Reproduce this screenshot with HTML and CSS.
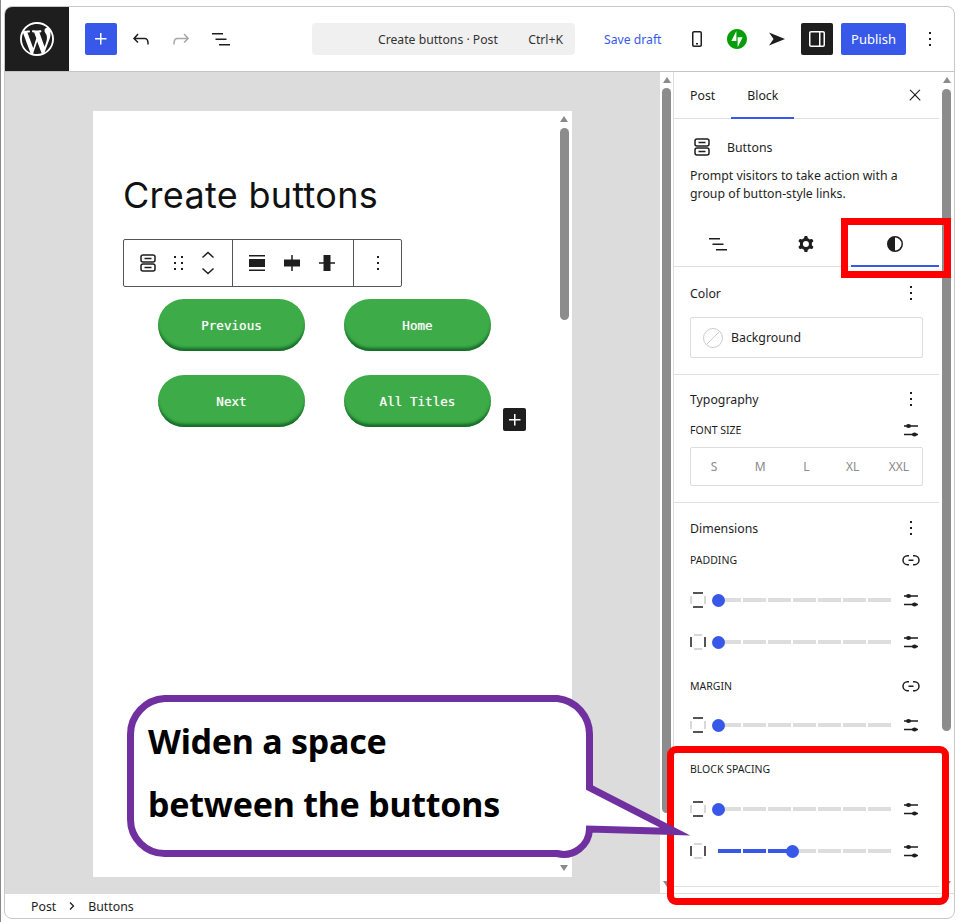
FILE: index.html
```html
<!DOCTYPE html>
<html lang="en">
<head>
<meta charset="utf-8">
<title>Create buttons</title>
<link rel="stylesheet" href="styles.css">
</head>
<body>
<svg class="defs" width="0" height="0" aria-hidden="true">
  <defs>
    <symbol id="i-kebab" viewBox="0 0 24 24"><path d="M13 19h-2v-2h2v2zm0-6h-2v-2h2v2zm0-6h-2V5h2v2z"/></symbol>
    <symbol id="i-list" viewBox="0 0 24 24"><path d="M3 6h11v1.5H3V6zm3.5 5.5h11V13h-11v-1.5zM21 17H10v1.5h11V17z"/></symbol>
    <symbol id="i-buttons" viewBox="0 0 24 24"><g fill="none" stroke="#1e1e1e" stroke-width="1.5"><rect x="5" y="4" width="14" height="7" rx="2"/><rect x="5" y="13" width="14" height="7" rx="2"/><path d="M8.500 7.500h7M8.500 16.500h7"/></g></symbol>
    <symbol id="i-sliders" viewBox="0 0 24 24"><path d="M5 7.250h14v1.500H5zM5 15.750h14v1.500H5z"/><ellipse cx="9.500" cy="8" rx="2.500" ry="2"/><ellipse cx="15.500" cy="16.500" rx="2.500" ry="2"/></symbol>
    <symbol id="i-link" viewBox="0 0 24 24"><path d="M10 17.389H8.444A5.194 5.194 0 1 1 8.444 7H10v1.500H8.444a3.694 3.694 0 0 0 0 7.389H10v1.500ZM14 7h1.556a5.194 5.194 0 0 1 0 10.390H14v-1.500h1.556a3.694 3.694 0 0 0 0-7.390H14V7Zm-4.500 6h5v-1.500h-5V13Z"/></symbol>
    <symbol id="i-axial-v" viewBox="0 0 16 16"><path d="M1 4v8M15 4v8" fill="none" stroke="#ccc" stroke-width="1.500"/><path d="M3 1h10M3 15h10" fill="none" stroke="#1e1e1e" stroke-width="1.500"/></symbol>
    <symbol id="i-axial-h" viewBox="0 0 16 16"><path d="M4 1h8M4 15h8" fill="none" stroke="#ccc" stroke-width="1.500"/><path d="M1 3v10M15 3v10" fill="none" stroke="#1e1e1e" stroke-width="1.500"/></symbol>
  </defs>
</svg>

<div class="frame">
  <header class="topbar">
    <div class="logo">
      <svg width="34" height="34" viewBox="0 0 20 20"><path fill="#fff" d="M20 10c0-5.510-4.490-10-10-10C4.480 0 0 4.490 0 10c0 5.520 4.480 10 10 10 5.510 0 10-4.480 10-10zM7.780 15.370L4.370 6.220c.55-.02 1.170-.08 1.170-.08.5-.06.44-1.130-.06-1.110 0 0-1.450.11-2.370.11-.18 0-.37 0-.58-.01C4.120 2.690 6.870 1.110 10 1.110c2.330 0 4.450.87 6.050 2.340-.68-.11-1.650.39-1.650 1.580 0 .74.45 1.360.9 2.100.35.61.55 1.360.55 2.460 0 1.490-1.400 5-1.400 5l-3.030-8.370c.54-.02.82-.17.82-.17.5-.05.44-1.250-.06-1.220 0 0-1.440.12-2.380.12-.87 0-2.330-.12-2.330-.12-.5-.03-.56 1.200-.06 1.220l.92.08 1.260 3.410zM17.410 10c.24-.64.74-1.870.43-4.250.7 1.290 1.050 2.710 1.050 4.250 0 3.290-1.730 6.240-4.400 7.780.97-2.590 1.940-5.200 2.920-7.780zM6.100 18.090C3.120 16.650 1.110 13.530 1.110 10c0-1.300.23-2.480.72-3.590C3.250 10.300 4.670 14.200 6.100 18.090zm4.030-6.630l2.580 6.980c-.86.29-1.760.45-2.710.45-.79 0-1.570-.11-2.290-.33.81-2.380 1.620-4.740 2.420-7.100z"/></svg>
    </div>
    <div class="tools">
      <span class="tool tool-primary"><svg width="24" height="24" viewBox="0 0 24 24"><path fill="#fff" d="M11 12.500V17.500H12.500V12.500H17.500V11H12.500V6H11V11H6V12.500H11Z"/></svg></span>
      <span class="tool"><svg width="24" height="24" viewBox="0 0 24 24"><path d="M18.300 11.700c-.6-.6-1.400-.9-2.300-.9H6.700l2.900-3.300-1.100-1-4.500 5L8.500 16l1-1-2.700-2.700H16c.5 0 .9.2 1.300.5 1 1 1 3.400 1 4.500v.3h1.500v-.2c0-1.500 0-4.300-1.500-5.700z"/></svg></span>
      <span class="tool"><svg width="24" height="24" viewBox="0 0 24 24"><path fill="#a8a8a8" d="M15.600 6.500l-1.100 1 2.900 3.300H8c-.9 0-1.700.3-2.300.9-1.400 1.500-1.400 4.200-1.400 5.600v.2h1.500v-.3c0-1.100 0-3.500 1-4.500.3-.3.7-.5 1.300-.5h9.200L14.500 15l1.100 1.100 4.600-4.600-4.600-5z"/></svg></span>
      <span class="tool"><svg width="24" height="24"><use href="#i-list"/></svg></span>
    </div>
    <div class="command"><span>Create buttons · Post</span><kbd class="shortcut">Ctrl+K</kbd></div>
    <a class="save">Save draft</a>
    <div class="actions">
      <span class="tool"><svg width="24" height="24" viewBox="0 0 24 24"><path d="M15 4H9c-1.100 0-2 .9-2 2v12c0 1.100.9 2 2 2h6c1.100 0 2-.9 2-2V6c0-1.100-.9-2-2-2zm.5 14c0 .3-.2.5-.5.5H9c-.3 0-.5-.2-.5-.5V6c0-.3.2-.5.5-.5h6c.3 0 .5.2.5.5v12zm-4.500-.5h2V16h-2v1.500z"/></svg></span>
      <span class="tool"><svg width="20" height="20" viewBox="0 0 32 32"><path fill="#069e08" d="M16 0C7.200 0 0 7.200 0 16s7.200 16 16 16 16-7.200 16-16S24.800 0 16 0zM15 19H7l8-16v16zm2 10V13h8l-8 16z"/></svg></span>
      <span class="tool"><svg width="24" height="24" viewBox="0 0 24 24"><path d="M4 5.500 20 12 4 18.500 8.500 12z"/></svg></span>
      <span class="tool tool-dark"><svg width="24" height="24" viewBox="0 0 24 24"><path fill="#fff" d="M18 4H6c-1.100 0-2 .9-2 2v12c0 1.100.9 2 2 2h12c1.100 0 2-.9 2-2V6c0-1.100-.9-2-2-2zM5.500 18V6c0-.3.2-.5.5-.5h8v13H6c-.3 0-.5-.2-.5-.5zm13 0c0 .3-.2.5-.5.5h-2.500v-13H18c.3 0 .5.2.5.5v12z"/></svg></span>
      <button class="publish">Publish</button>
      <span class="tool"><svg width="24" height="24"><use href="#i-kebab"/></svg></span>
    </div>
  </header>

  <div class="main">
    <section class="canvas">
      <article class="page">
        <div class="page-body">
          <h1 class="title">Create buttons</h1>
          <div class="block-toolbar">
            <div class="tb-group tb-first">
              <svg width="24" height="24"><use href="#i-buttons"/></svg>
              <svg width="24" height="24" viewBox="0 0 24 24"><path d="M8 5h2v2H8zm0 6h2v2H8zm0 6h2v2H8zM15 5h2v2h-2zm0 6h2v2h-2zm0 6h2v2h-2z"/></svg>
              <svg width="24" height="30" viewBox="0 0 24 30"><path fill="none" stroke="#1e1e1e" stroke-width="1.500" d="M6.500 9.500 12 4.500l5.500 5M6.500 20.500l5.500 5 5.500-5"/></svg>
            </div>
            <div class="tb-group tb-second">
              <svg width="24" height="24" viewBox="0 0 24 24"><path d="M4 4h16v1.500H4zM4 18.500h16V20H4zM4 8h16v8H4z"/></svg>
              <svg width="24" height="24" viewBox="0 0 24 24"><path d="M4 8.500h16v7H4zM11.250 4h1.500v16h-1.500z"/></svg>
              <svg width="24" height="24" viewBox="0 0 24 24"><path d="M8.500 4h7v16h-7zM4 11.250h16v1.500H4z"/></svg>
            </div>
            <div class="tb-group tb-third">
              <svg width="24" height="24"><use href="#i-kebab"/></svg>
            </div>
          </div>
          <div class="button-grid">
            <a class="wp-button">Previous</a>
            <a class="wp-button">Home</a>
            <a class="wp-button">Next</a>
            <a class="wp-button">All Titles</a>
            <span class="appender"><svg width="24" height="24" viewBox="0 0 24 24"><path fill="#fff" d="M11 12.500V17.500H12.500V12.500H17.500V11H12.500V6H11V11H6V12.500H11Z"/></svg></span>
          </div>
        </div>
        <div class="scrollbar page-scroll">
          <i class="arrow-up"></i>
          <i class="thumb thumb-page"></i>
          <i class="spacer"></i>
          <i class="arrow-down"></i>
        </div>
      </article>
    </section>

    <div class="scrollbar canvas-scroll">
      <i class="arrow-up"></i>
      <i class="thumb thumb-canvas"></i>
      <i class="spacer"></i>
      <i class="arrow-down"></i>
    </div>

    <aside class="sidebar">
      <div class="side-tabs">
        <span class="side-tab">Post</span>
        <span class="side-tab side-tab-active">Block</span>
        <svg class="close" width="18" height="18" viewBox="0 0 24 24"><path d="M13 11.800l6.100-6.300-1-1-6.100 6.200-6.100-6.200-1 1 6.100 6.300-6.500 6.700 1 1 6.500-6.600 6.500 6.600 1-1z"/></svg>
      </div>
      <div class="card">
        <div class="card-head"><svg width="24" height="24"><use href="#i-buttons"/></svg><span>Buttons</span></div>
        <p class="card-desc">Prompt visitors to take action with a group of button-style links.</p>
      </div>
      <div class="style-tabs">
        <span class="style-tab"><svg width="24" height="24"><use href="#i-list"/></svg></span>
        <span class="style-tab"><svg width="24" height="24" viewBox="0 0 24 24"><path fill-rule="evenodd" d="M10.289 4.836A1 1 0 0 1 11.275 4h1.306a1 1 0 0 1 .987.836l.244 1.466c.787.26 1.503.679 2.108 1.218l1.393-.522a1 1 0 0 1 1.216.437l.653 1.130a1 1 0 0 1-.23 1.273l-1.148.944a6.025 6.025 0 0 1 0 2.435l1.149.946a1 1 0 0 1 .23 1.272l-.653 1.130a1 1 0 0 1-1.216.437l-1.394-.522c-.605.54-1.320.958-2.108 1.218l-.244 1.466a1 1 0 0 1-.987.836h-1.306a1 1 0 0 1-.986-.836l-.244-1.466a5.995 5.995 0 0 1-2.108-1.218l-1.394.522a1 1 0 0 1-1.217-.436l-.653-1.131a1 1 0 0 1 .23-1.272l1.149-.946a6.026 6.026 0 0 1 0-2.435l-1.148-.944a1 1 0 0 1-.23-1.272l.653-1.131a1 1 0 0 1 1.217-.437l1.393.522a5.994 5.994 0 0 1 2.108-1.218l.244-1.466zM14.929 12a3 3 0 1 1-6 0 3 3 0 0 1 6 0z"/></svg></span>
        <span class="style-tab style-tab-active"><svg width="24" height="24" viewBox="0 0 24 24"><path fill-rule="evenodd" d="M12 4a8 8 0 1 0 0 16 8 8 0 0 0 0-16zm0 1.500a6.500 6.500 0 0 1 0 13z"/></svg></span>
      </div>

      <section class="panel panel-color">
        <div class="panel-head"><span>Color</span><svg width="24" height="24"><use href="#i-kebab"/></svg></div>
        <div class="color-box">
          <svg width="22" height="22" viewBox="0 0 22 22"><circle cx="11" cy="11" r="9.500" fill="none" stroke="#ccc"/><path d="M4.500 17.500 17.500 4.500" stroke="#ccc"/></svg>
          <span>Background</span>
        </div>
      </section>

      <section class="panel panel-type">
        <div class="panel-head"><span>Typography</span><svg width="24" height="24"><use href="#i-kebab"/></svg></div>
        <div class="sub-head sub-fontsize"><span>FONT SIZE</span><svg width="24" height="24"><use href="#i-sliders"/></svg></div>
        <div class="size-box"><span>S</span><span>M</span><span>L</span><span>XL</span><span>XXL</span></div>
      </section>

      <section class="panel panel-dims">
        <div class="panel-head"><span>Dimensions</span><svg width="24" height="24"><use href="#i-kebab"/></svg></div>
        <div class="sub-head sub-padding"><span>PADDING</span><svg width="24" height="24"><use href="#i-link"/></svg></div>
        <div class="slider-row sl-a">
          <svg width="16" height="16"><use href="#i-axial-v"/></svg>
          <div class="track"><i></i><i></i><i></i><i></i><i></i><i></i><i></i><b class="knob" style="left:-6px"></b></div>
          <svg width="24" height="24"><use href="#i-sliders"/></svg>
        </div>
        <div class="slider-row sl-b">
          <svg width="16" height="16"><use href="#i-axial-h"/></svg>
          <div class="track"><i></i><i></i><i></i><i></i><i></i><i></i><i></i><b class="knob" style="left:-6px"></b></div>
          <svg width="24" height="24"><use href="#i-sliders"/></svg>
        </div>
        <div class="sub-head sub-margin"><span>MARGIN</span><svg width="24" height="24"><use href="#i-link"/></svg></div>
        <div class="slider-row sl-c">
          <svg width="16" height="16"><use href="#i-axial-v"/></svg>
          <div class="track"><i></i><i></i><i></i><i></i><i></i><i></i><i></i><b class="knob" style="left:-6px"></b></div>
          <svg width="24" height="24"><use href="#i-sliders"/></svg>
        </div>
        <div class="sub-head sub-spacing"><span>BLOCK SPACING</span></div>
        <div class="slider-row sl-d">
          <svg width="16" height="16"><use href="#i-axial-v"/></svg>
          <div class="track"><i></i><i></i><i></i><i></i><i></i><i></i><i></i><b class="knob" style="left:-6px"></b></div>
          <svg width="24" height="24"><use href="#i-sliders"/></svg>
        </div>
        <div class="slider-row sl-e">
          <svg width="16" height="16"><use href="#i-axial-h"/></svg>
          <div class="track"><i class="on"></i><i class="on"></i><i class="on"></i><i></i><i></i><i></i><i></i><b class="knob" style="left:68px"></b></div>
          <svg width="24" height="24"><use href="#i-sliders"/></svg>
        </div>
      </section>
    </aside>

    <div class="scrollbar side-scroll">
      <i class="arrow-up"></i>
      <i class="thumb thumb-side"></i>
      <i class="spacer"></i>
      <i class="arrow-down"></i>
    </div>
  </div>

  <footer class="crumbs">
    <span>Post</span>
    <svg width="16" height="16" viewBox="0 0 16 16"><path fill="none" stroke="#1e1e1e" stroke-width="1.300" d="m6 4.500 3.500 3.500L6 11.500"/></svg>
    <span>Buttons</span>
  </footer>
</div>

<div class="mark mark-tab"></div>
<div class="mark mark-spacing"></div>

<svg class="callout-shape" width="600" height="180" viewBox="0 0 600 180">
  <path fill="#fff" stroke="#7030a0" stroke-width="7" stroke-miterlimit="20" d="M37.500 4.500H430.500A36 36 0 0 1 462.500 40.500V93.500L548 137.500 462.500 135A26 26 0 0 1 430 159.500H37.500A34 34 0 0 1 3.500 125.500V40.500A36 36 0 0 1 37.500 4.500Z"/>
</svg>
<p class="callout-text">Widen a space<br>between the buttons</p>
</body>
</html>
```

FILE: styles.css
```css
* { box-sizing: border-box; }
html, body { margin: 0; padding: 0; }
body {
  width: 960px;
  height: 922px;
  overflow: hidden;
  background: #fff;
  color: #1e1e1e;
  font-family: "Noto Sans", "Open Sans", sans-serif;
  font-size: 12.3px;
  border-left: 1px solid #888;
  position: relative;
}
.defs { position: absolute; }
svg { display: block; flex: none; fill: #1e1e1e; }

.frame {
  margin: 6px 0 0 3px;
  width: 951px;
  height: 913px;
  border: 1px solid #c8c8c8;
  border-radius: 8px;
  display: flex;
  flex-direction: column;
  overflow: hidden;
  background: #fff;
}

/* top bar */
.topbar {
  flex: none;
  height: 65px;
  border-bottom: 1px solid #c4c4c4;
  display: flex;
  align-items: center;
}
.logo {
  width: 64px;
  height: 64px;
  background: #1e1e1e;
  display: flex;
  align-items: center;
  justify-content: center;
}
.tools { display: flex; gap: 8px; margin-left: 16px; }
.tool {
  width: 32px;
  height: 32px;
  border-radius: 2px;
  display: flex;
  align-items: center;
  justify-content: center;
}
.tool-primary { background: #3858e9; }
.tool-dark { background: #1e1e1e; }
.command {
  margin-left: 75px;
  width: 263px;
  height: 32px;
  background: #f0f0f0;
  border-radius: 4px;
  display: flex;
  align-items: center;
  padding: 0 12px 0 66px;
  justify-content: space-between;
  font-size: 12.2px;
  color: #333;
}
.shortcut { font: inherit; }
.save { margin-left: 29px; color: #3858e9; font-size: 12.2px; }
.actions { margin-left: auto; margin-right: 8px; display: flex; gap: 8px; align-items: center; }
.publish {
  width: 65px;
  height: 32px;
  border: 0;
  border-radius: 2px;
  padding: 0;
  background: #3858e9;
  color: #fff;
  font: inherit;
  font-size: 13px;
}

/* main */
.main { flex: none; height: 821px; display: flex; }
.canvas {
  width: 655px;
  background: #dcdcdc;
  padding: 39px 0 0 88px;
}
.page {
  width: 479px;
  height: 766px;
  background: #fff;
  display: flex;
}
.page-body { flex: 1; padding: 62px 0 0 30px; min-width: 0; }
.title {
  margin: 0;
  font-family: Inter, "Noto Sans", sans-serif;
  font-size: 36px;
  line-height: 44px;
  font-weight: 400;
  letter-spacing: .3px;
  color: #111;
}
.block-toolbar {
  margin-top: 22px;
  width: 279px;
  height: 48px;
  border: 1px solid #555;
  border-radius: 2px;
  display: flex;
  background: #fff;
}
.tb-group { display: flex; align-items: center; padding-left: 12px; }
.tb-first { width: 108px; gap: 6px; }
.tb-second { width: 121px; gap: 11px; border-left: 1px solid #555; }
.tb-third { flex: 1; border-left: 1px solid #555; }
.button-grid {
  position: relative;
  margin: 12px 0 0 35px;
  width: 333px;
  display: grid;
  grid-template-columns: 147px 147px;
  grid-auto-rows: 52px;
  column-gap: 39px;
  row-gap: 24px;
}
.wp-button {
  border-radius: 26px;
  background: #3dab47;
  box-shadow: inset 0 -4px 3px -1px #166a2a;
  color: #fff;
  display: flex;
  align-items: center;
  justify-content: center;
  font-family: "DejaVu Sans Mono", "Liberation Mono", monospace;
  font-size: 12.6px;
  text-shadow: 0 0 1px rgba(255, 255, 255, .6);
}
.appender {
  position: absolute;
  left: 345px;
  top: 109px;
  width: 23px;
  height: 23px;
  border-radius: 2px;
  background: #1e1e1e;
  display: flex;
  align-items: center;
  justify-content: center;
}

/* scrollbars */
.scrollbar { display: flex; flex-direction: column; align-items: center; flex: none; }
.scrollbar .spacer { flex: 1; }
.arrow-up, .arrow-down {
  width: 0;
  height: 0;
  border-left: 4px solid transparent;
  border-right: 4px solid transparent;
}
.arrow-up { border-bottom: 6px solid #8a8a8a; }
.arrow-down { border-top: 6px solid #8a8a8a; }
.thumb { width: 9px; border-radius: 4.5px; background: #8c8c8c; }
.page-scroll { width: 14px; margin-right: 1px; padding: 5px 0 6px; }
.thumb-page { height: 192px; margin-top: 6px; }
.canvas-scroll { width: 13px; padding: 5px 0 6px; background: #fff; }
.thumb-canvas { height: 725px; margin-top: 5px; }
.side-scroll { width: 15px; padding: 5px 0 6px; }
.thumb-side { height: 642px; margin-top: 6px; }

/* sidebar */
.sidebar { width: 266px; border-left: 1px solid #ddd; flex: none; }
.side-tabs {
  height: 47px;
  border-bottom: 1px solid #e0e0e0;
  display: flex;
  align-items: center;
  padding-right: 15px;
}
.side-tab {
  height: 47px;
  padding: 0 16px;
  display: flex;
  align-items: center;
}
.side-tab-active { box-shadow: inset 0 -2px 0 #3858e9; }
.close { margin-left: auto; }
.card { height: 101px; padding: 18px 16px 0; }
.card-head { display: flex; align-items: center; gap: 13px; height: 20px; }
.card-desc { margin: 10px 0 0; line-height: 18px; }
.style-tabs { height: 47px; display: grid; grid-template-columns: repeat(3, 1fr); border-bottom: 1px solid #e0e0e0; }
.style-tab { display: flex; align-items: center; justify-content: center; padding-top: 1px; }
.style-tab-active { box-shadow: 0 1px 0 #3858e9, inset 0 -1px 0 #3858e9; }
.panel { padding: 0 16px; border-bottom: 1px solid #e0e0e0; }
.panel-color { height: 108px; padding-top: 14px; }
.panel-type { height: 128px; padding-top: 12px; }
.panel-dims { height: 384px; padding-top: 13px; }
.panel-head, .sub-head { display: flex; align-items: center; justify-content: space-between; height: 24px; }
.sub-head { font-size: 10.5px; }
.color-box {
  margin-top: 12px;
  height: 41px;
  border: 1px solid #ddd;
  border-radius: 2px;
  display: flex;
  align-items: center;
  gap: 7px;
  padding-left: 11px;
}
.sub-fontsize { margin-top: 7px; }
.size-box {
  margin-top: 5px;
  height: 39px;
  border: 1px solid #ddd;
  border-radius: 2px;
  display: grid;
  grid-template-columns: repeat(5, 1fr);
  color: #8a8a8a;
  font-size: 12px;
}
.size-box span { display: flex; align-items: center; justify-content: center; }
.sub-padding { margin-top: 8px; }
.sub-margin { margin-top: 20px; }
.sub-spacing { margin-top: 20px; }
.slider-row { display: flex; align-items: center; height: 24px; }
.sl-a { margin-top: 16px; }
.sl-b { margin-top: 18px; }
.sl-c { margin-top: 15px; }
.sl-d { margin-top: 16px; }
.sl-e { margin-top: 18px; }
.track {
  position: relative;
  margin: 0 8px 0 12px;
  width: 173px;
  height: 4px;
  display: flex;
  gap: 1.5px;
}
.track i { flex: 1; background: #ddd; }
.track i.on { background: #3858e9; }
.knob {
  position: absolute;
  top: -4.5px;
  width: 13px;
  height: 13px;
  border-radius: 50%;
  background: #3858e9;
}

/* footer */
.crumbs {
  flex: 1;
  border-top: 1px solid #ddd;
  display: flex;
  align-items: center;
  padding-left: 26px;
  gap: 8px;
}

/* overlays */
.mark { position: absolute; border: 7px solid #f00; }
.mark-tab { left: 840px; top: 218px; width: 110px; height: 60px; }
.mark-spacing { left: 666px; top: 746px; width: 282px; height: 159px; border-radius: 9px; }
.callout-shape { position: absolute; left: 126px; top: 694px; fill: none; overflow: visible; }
.callout-text {
  position: absolute;
  left: 147px;
  top: 710px;
  margin: 0;
  color: #000;
  font-family: "Noto Sans", sans-serif;
  font-weight: 700;
  font-size: 34px;
  letter-spacing: -.25px;
  line-height: 63px;
  white-space: nowrap;
}
```
